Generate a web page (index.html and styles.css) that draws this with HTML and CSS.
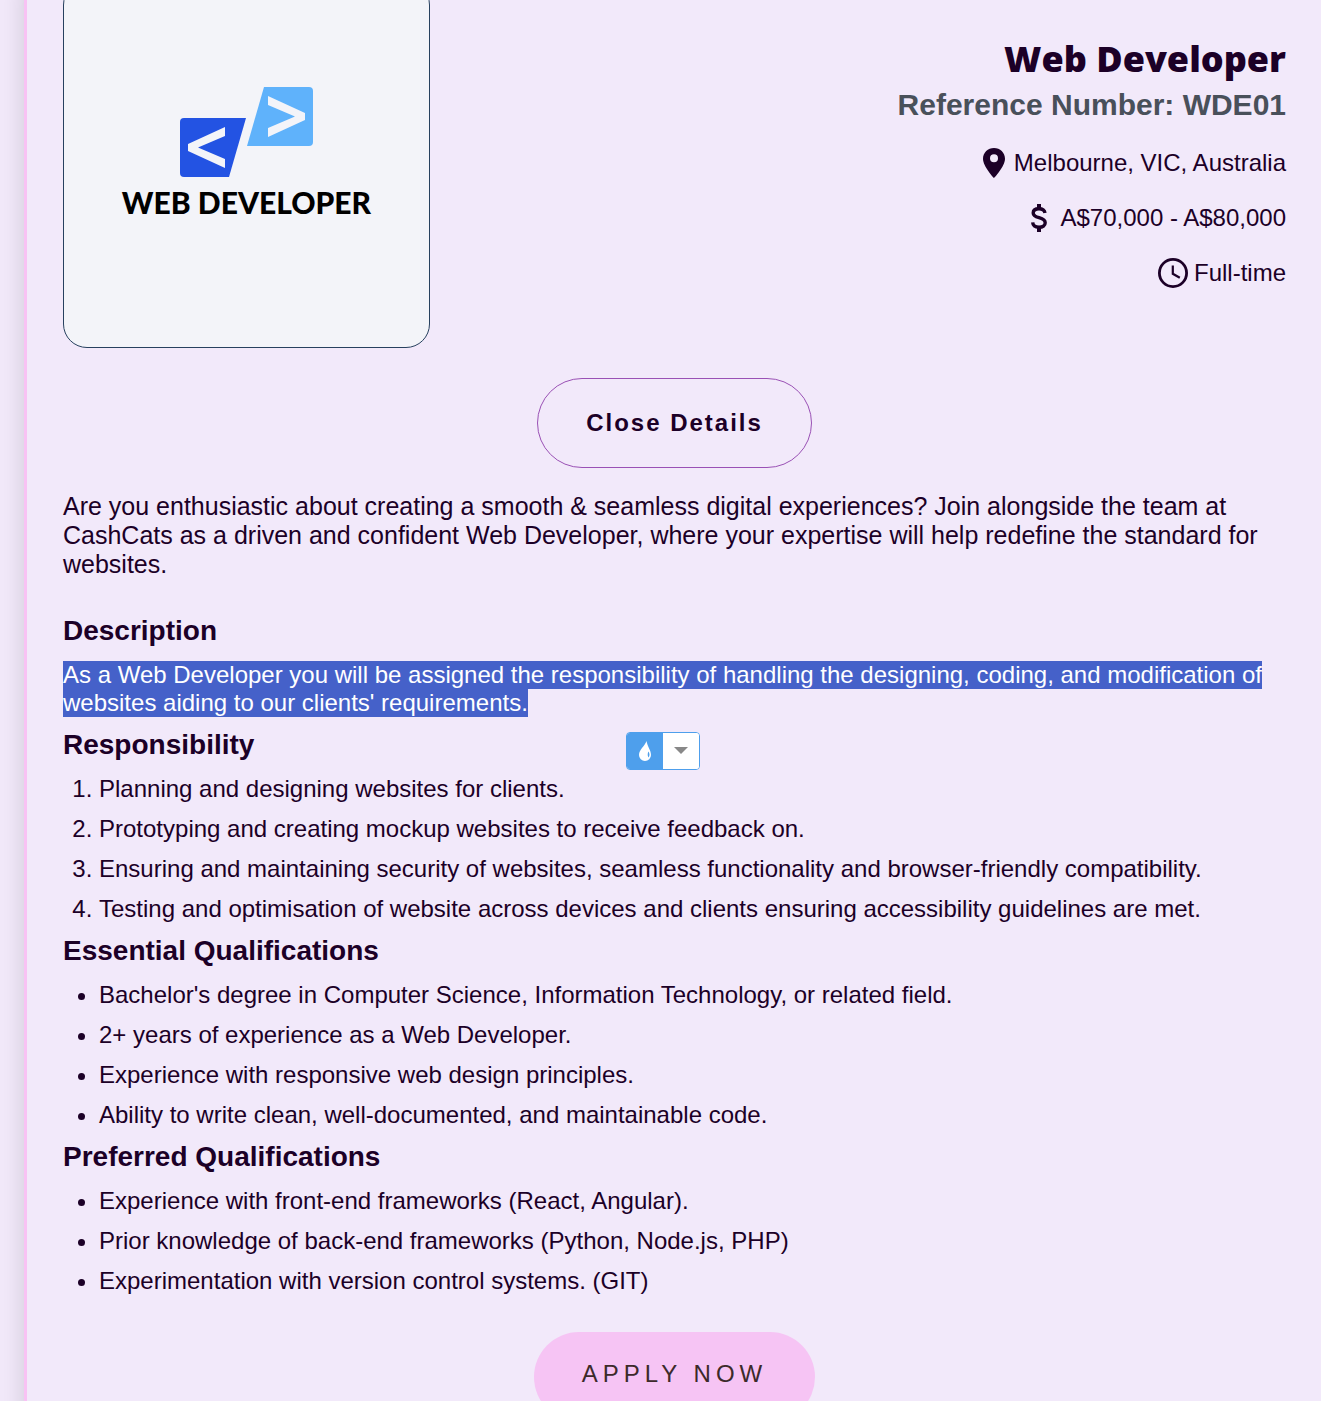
FILE: index.html
```html
<!DOCTYPE html>
<html lang="en">
<head>
<meta charset="utf-8">
<title>Web Developer – CashCats</title>
<meta name="viewport" content="width=device-width, initial-scale=1">
<link rel="stylesheet" href="styles.css">
</head>
<body>
<main class="job">
  <header class="job-head">
    <div class="brand">
      <svg class="brand-mark" viewBox="0 0 134 90" aria-hidden="true">
        <path fill="#2353e3" d="M5 31H67L50 90H5a4 4 0 0 1-4-4V35a4 4 0 0 1 4-4z"/>
        <path fill="#5fb2fb" d="M85 0H130a4 4 0 0 1 4 4V55a4 4 0 0 1-4 4H68z"/>
        <path fill="#f3f4f9" d="M46 40v9L19 60.500l27 11.500v9L9 64v-7z"/>
        <path fill="#f3f4f9" d="M89 9v9l27 11.500L89 41v9l37-17v-7z"/>
      </svg>
      <span class="brand-name">WEB DEVELOPER</span>
    </div>
    <div class="facts">
      <h1 class="title">Web Developer</h1>
      <h2 class="reference">Reference Number: WDE01</h2>
      <ul class="meta">
        <li><svg class="icon pin" viewBox="0 0 22 30" aria-hidden="true"><path fill="currentColor" fill-rule="evenodd" d="M11 0C4.900 0 0 4.700 0 10.700 0 18.500 11 30 11 30s11-11.500 11-19.300C22 4.700 17.100 0 11 0zm0 14.300a4 4 0 1 1 0-8 4 4 0 0 1 0 8z"/></svg>Melbourne, VIC, Australia</li>
        <li><svg class="icon dollar" viewBox="0 0 16 28" aria-hidden="true"><path fill="none" stroke="currentColor" stroke-width="3.400" d="M14 9C13.500 6 11.500 4.800 8 4.800 4.300 4.800 2.200 6.300 2.200 9c0 6.200 12 3.200 12 9.800 0 2.700-2.400 4.400-6.100 4.400-4 0-6.200-1.800-6.400-4.800"/><path fill="currentColor" d="M6 0h4v5H6zM6 23h4v5H6z"/></svg>A$70,000 - A$80,000</li>
        <li><svg class="icon clock" viewBox="0 0 30 30" aria-hidden="true"><g fill="none" stroke="currentColor"><circle cx="15" cy="15" r="13.600" stroke-width="2.800"/><path stroke-width="2.200" d="M14.800 7.500v8.300l7 4"/></g></svg>Full-time</li>
      </ul>
    </div>
  </header>

  <button class="close" type="button">Close Details</button>

  <p class="intro">Are you enthusiastic about creating a smooth &amp; seamless digital experiences? Join alongside the team at CashCats as a driven and confident Web Developer, where your expertise will help redefine the standard for websites.</p>

  <section class="block">
    <h3>Description</h3>
    <p><mark>As a Web Developer you will be assigned the responsibility of handling the designing, coding, and modification of websites aiding to our clients' requirements.</mark></p>
  </section>

  <section class="block">
    <h3>Responsibility</h3>
    <ol>
      <li>Planning and designing websites for clients.</li>
      <li>Prototyping and creating mockup websites to receive feedback on.</li>
      <li>Ensuring and maintaining security of websites, seamless functionality and browser-friendly compatibility.</li>
      <li>Testing and optimisation of website across devices and clients ensuring accessibility guidelines are met.</li>
    </ol>
    <div class="picker">
      <button class="drop" type="button" aria-label="Colour"><svg viewBox="0 0 12 20" aria-hidden="true"><path fill="#fff" d="M7.500 0C6 5 0 8.500 0 14a6 6 0 0 0 12 0C12 9 8.500 6 7.500 0z"/><path fill="#4e9fec" d="M9.300 10.500c1.600 2 1.600 4.500 0 6-.8-1.800-.8-4 0-6z"/></svg></button>
      <button class="more" type="button" aria-label="More"><svg viewBox="0 0 14 7" aria-hidden="true"><path fill="#888" d="M0 0h14L7 7z"/></svg></button>
    </div>
  </section>

  <section class="block">
    <h3>Essential Qualifications</h3>
    <ul>
      <li>Bachelor's degree in Computer Science, Information Technology, or related field.</li>
      <li>2+ years of experience as a Web Developer.</li>
      <li>Experience with responsive web design principles.</li>
      <li>Ability to write clean, well-documented, and maintainable code.</li>
    </ul>
  </section>

  <section class="block">
    <h3>Preferred Qualifications</h3>
    <ul>
      <li>Experience with front-end frameworks (React, Angular).</li>
      <li>Prior knowledge of back-end frameworks (Python, Node.js, PHP)</li>
      <li>Experimentation with version control systems. (GIT)</li>
    </ul>
  </section>

  <a class="apply" href="#apply">APPLY NOW</a>
</main>
</body>
</html>
```

FILE: styles.css
```css
* { box-sizing: border-box; }

body {
  margin: 0;
  height: 100vh;
  overflow: hidden;
  background: #f2e9fa;
  color: #1c0027;
  font-family: Arial, "Liberation Sans", sans-serif;
  font-size: 24px;
  line-height: 28px;
}

h1, h2, h3, p, ul, ol { margin: 0; }

.job {
  display: flex;
  flex-direction: column;
  margin: -19px 0 0 24px;
  padding: 0 35px 36px 36px;
  border-left: 3px solid #f8c2f4;
  background: #f2e9fa;
  box-shadow: 0 0 24px rgba(0, 0, 0, 0.14);
}

.job-head {
  display: flex;
  justify-content: space-between;
}

.brand {
  display: flex;
  flex-direction: column;
  align-items: center;
  justify-content: center;
  gap: 7px;
  width: 30%;
  aspect-ratio: 1;
  padding-bottom: 21px;
  border: 1px solid #27415f;
  border-radius: 24px;
  background: #f3f4f9;
}

.brand-mark { width: 134px; height: 90px; }

.brand-name {
  color: #000;
  font-family: Lato, sans-serif;
  font-size: 30px;
  font-weight: 900;
  line-height: 36px;
}

.facts {
  display: flex;
  flex-direction: column;
  padding-top: 55px;
  text-align: right;
}

.title {
  font-family: "Arial Black", "Open Sans", sans-serif;
  font-size: 36px;
  font-weight: 800;
  line-height: 46px;
}

.reference {
  color: #49505a;
  font-size: 30px;
  line-height: 46px;
}

.meta {
  display: flex;
  flex-direction: column;
  gap: 23px;
  padding: 19px 0 0;
  list-style: none;
}

.meta li {
  display: flex;
  align-items: center;
  justify-content: flex-end;
  gap: 6px;
  line-height: 32px;
}

.pin { width: 22px; height: 30px; margin-right: 3px; }
.dollar { width: 16px; height: 28px; margin-right: 7px; }
.clock { width: 30px; height: 30px; }

.close, .apply {
  align-self: center;
  height: 90px;
  padding: 0 48px;
  border-radius: 45px;
  font-family: inherit;
  font-size: 24px;
}

.close {
  margin-top: 30px;
  border: 1px solid #9a51b5;
  background: transparent;
  color: inherit;
  font-weight: 700;
  letter-spacing: 2px;
}

.intro {
  margin: 24px 0;
  font-size: 25px;
  line-height: 29px;
}

.block { position: relative; padding-top: 12px; }

.block h3 {
  margin-bottom: 14px;
  font-size: 28px;
  line-height: 32px;
}

.block ul, .block ol {
  display: flex;
  flex-direction: column;
  gap: 12px;
  padding-left: 36px;
}

mark {
  padding-bottom: 1px;
  background: #4561c9;
  color: #fff;
}

/* Floating control over the selected passage */
.picker {
  position: absolute;
  top: 15px;
  left: 46%;
  display: flex;
  width: 74px;
  height: 38px;
  overflow: hidden;
  border: 1px solid #4e9fec;
  border-radius: 4px;
  background: #fff;
}

.picker button {
  display: flex;
  flex: 1;
  align-items: center;
  justify-content: center;
  padding: 0;
  border: 0;
  background: #fff;
}

.picker .drop { background: #4e9fec; }
.drop svg { width: 12px; height: 20px; }
.more svg { width: 14px; height: 7px; }

.apply {
  margin-top: 37px;
  background: #f6c4f4;
  color: #3c2a2a;
  letter-spacing: 5px;
  line-height: 84px;
  text-decoration: none;
}
```
